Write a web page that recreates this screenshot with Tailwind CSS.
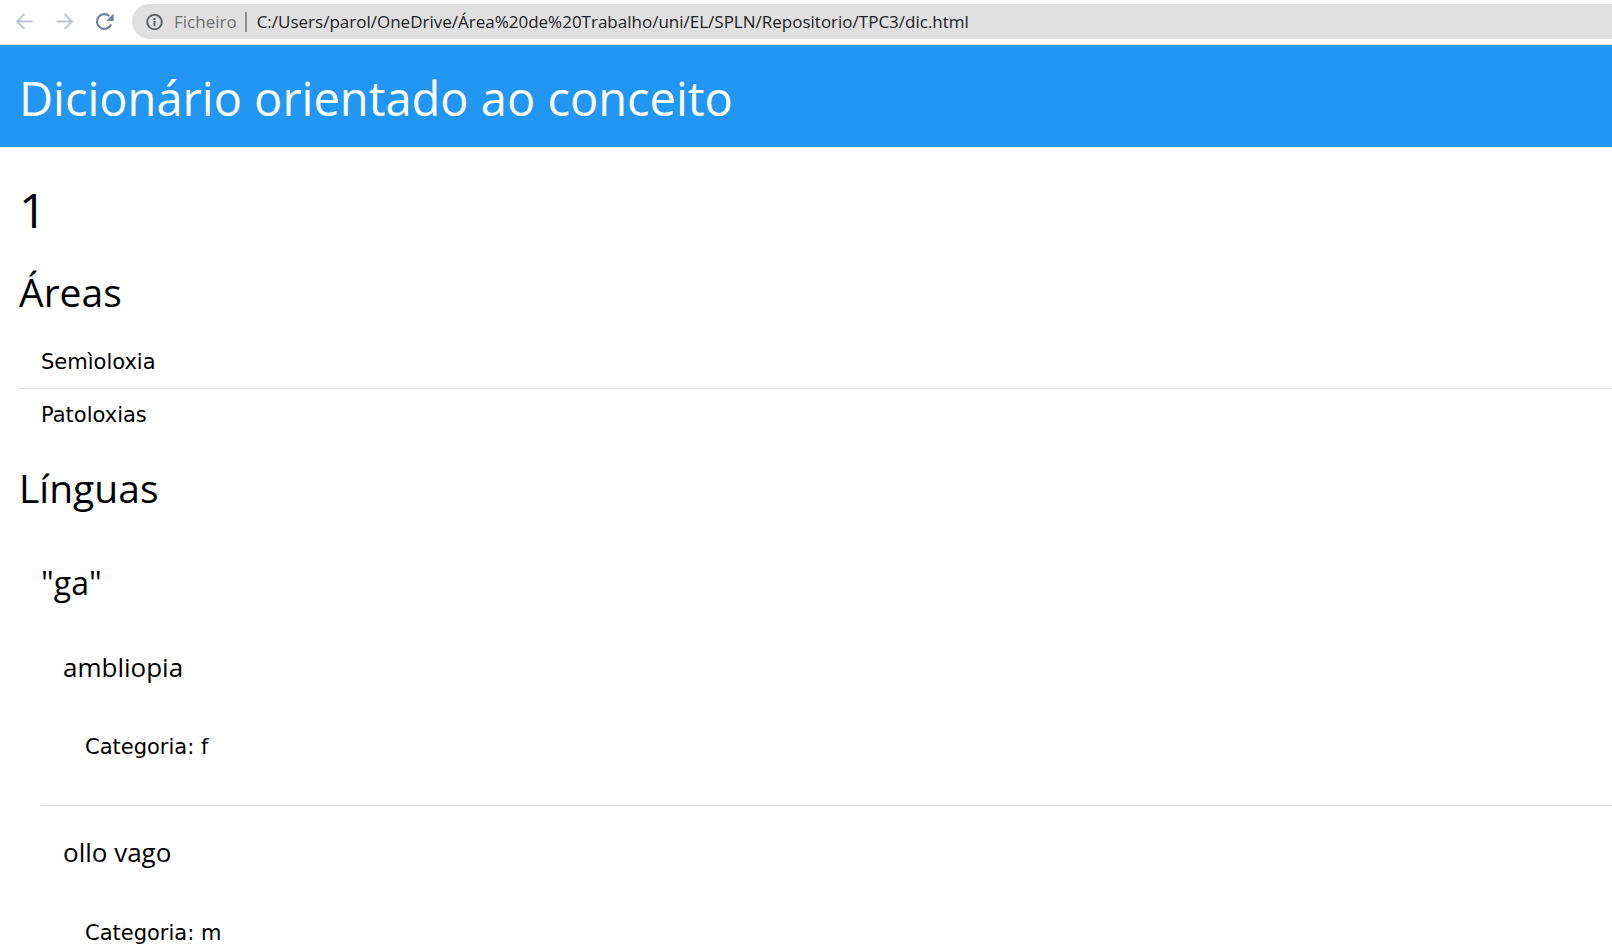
<!DOCTYPE html>
<html lang="pt">
<head>
<meta charset="utf-8">
<title>Dicionário orientado ao conceito</title>
<script src="https://cdn.jsdelivr.net/npm/@tailwindcss/browser@4"></script>
</head>
<body class="h-screen overflow-hidden bg-white text-black font-['DejaVu_Sans',sans-serif] text-[21px] leading-[31px]">
<nav class="flex h-[45px] items-start border-b border-[#dadce0] pt-1 font-['Open_Sans',sans-serif] text-[17px]">
  <div class="flex h-[35px] w-[132px] shrink-0 items-center gap-4 pl-3">
    <button aria-label="Recuar" class="text-[#c0c6d2]"><svg class="size-6" viewBox="0 0 24 24" fill="none" stroke="currentColor" stroke-width="2"><path d="M20.500 11.500H5.500M12.500 4L5 11.500l7.500 7.500"/></svg></button>
    <button aria-label="Avançar" class="text-[#c0c6d2]"><svg class="size-6" viewBox="0 0 24 24" fill="none" stroke="currentColor" stroke-width="2"><path d="M4.500 11.500H19.500M12.500 4L20 11.500l-7.500 7.500"/></svg></button>
    <button aria-label="Recarregar" class="text-[#73819b]"><svg class="size-6" viewBox="0 0 24 24" fill="none"><path d="M19.100 14.500A7.400 7.400 0 1 1 17.500 6.200" stroke="currentColor" stroke-width="2.200"/><path d="M21.700 3.500v7.500h-7.500z" fill="currentColor"/></svg></button>
  </div>
  <div class="flex h-[35px] flex-1 items-center rounded-l-full bg-[#e0e0e0] pl-3">
    <svg class="size-5 shrink-0 text-[#5f6368]" viewBox="0 0 20 20" fill="none" stroke="currentColor" stroke-width="2"><circle cx="10.500" cy="10" r="7.300"/><path d="M10.500 9v5M10.500 6v2"/></svg>
    <label for="url" class="ml-[10px] text-[#707070]">Ficheiro</label>
    <span class="mx-2 h-5 w-0.5 bg-[#909090]"></span>
    <input id="url" type="text" class="ml-0.5 min-w-0 flex-1 bg-transparent text-[#202124] outline-none" value="C:/Users/parol/OneDrive/Área%20de%20Trabalho/uni/EL/SPLN/Repositorio/TPC3/dic.html">
  </div>
</nav>
<header class="bg-[#2196f3] pt-4 pb-3 pl-[19px] text-white">
  <h1 class="font-['Open_Sans',sans-serif] text-[47px] leading-[74px]">Dicionário orientado ao conceito</h1>
</header>
<main class="pt-[26px] pl-[19px]">
  <h2 class="font-['Open_Sans',sans-serif] text-[48px] leading-[74px]">1</h2>
  <h3 class="mt-[14px] mb-3 font-['Open_Sans',sans-serif] text-[39px] leading-[62px]">Áreas</h3>
  <ul>
    <li class="border-b border-[#dddddd] pt-3 pb-[10px] pl-[22px]">Semìoloxia</li>
    <li class="pt-[11px] pb-[10px] pl-[22px]">Patoloxias</li>
  </ul>
  <h3 class="mt-4 mb-[14px] font-['Open_Sans',sans-serif] text-[39px] leading-[62px]">Línguas</h3>
  <ul>
    <li class="pt-[25px] pl-[22px]">
      <h4 class="mb-[14px] font-['Open_Sans',sans-serif] text-[32px] leading-[50px]">"ga"</h4>
      <ul>
        <li class="border-b border-[#dddddd] pt-[25px] pb-[42px] pl-[22px]">
          <h5 class="mb-[44px] font-['Open_Sans',sans-serif] text-[26px] leading-[41px]">ambliopia</h5>
          <p class="pl-[22px]">Categoria: f</p>
        </li>
        <li class="pt-[26px] pb-[42px] pl-[22px]">
          <h5 class="mb-[45px] font-['Open_Sans',sans-serif] text-[26px] leading-[41px]">ollo vago</h5>
          <p class="pl-[22px]">Categoria: m</p>
        </li>
      </ul>
    </li>
  </ul>
</main>
</body>
</html>
